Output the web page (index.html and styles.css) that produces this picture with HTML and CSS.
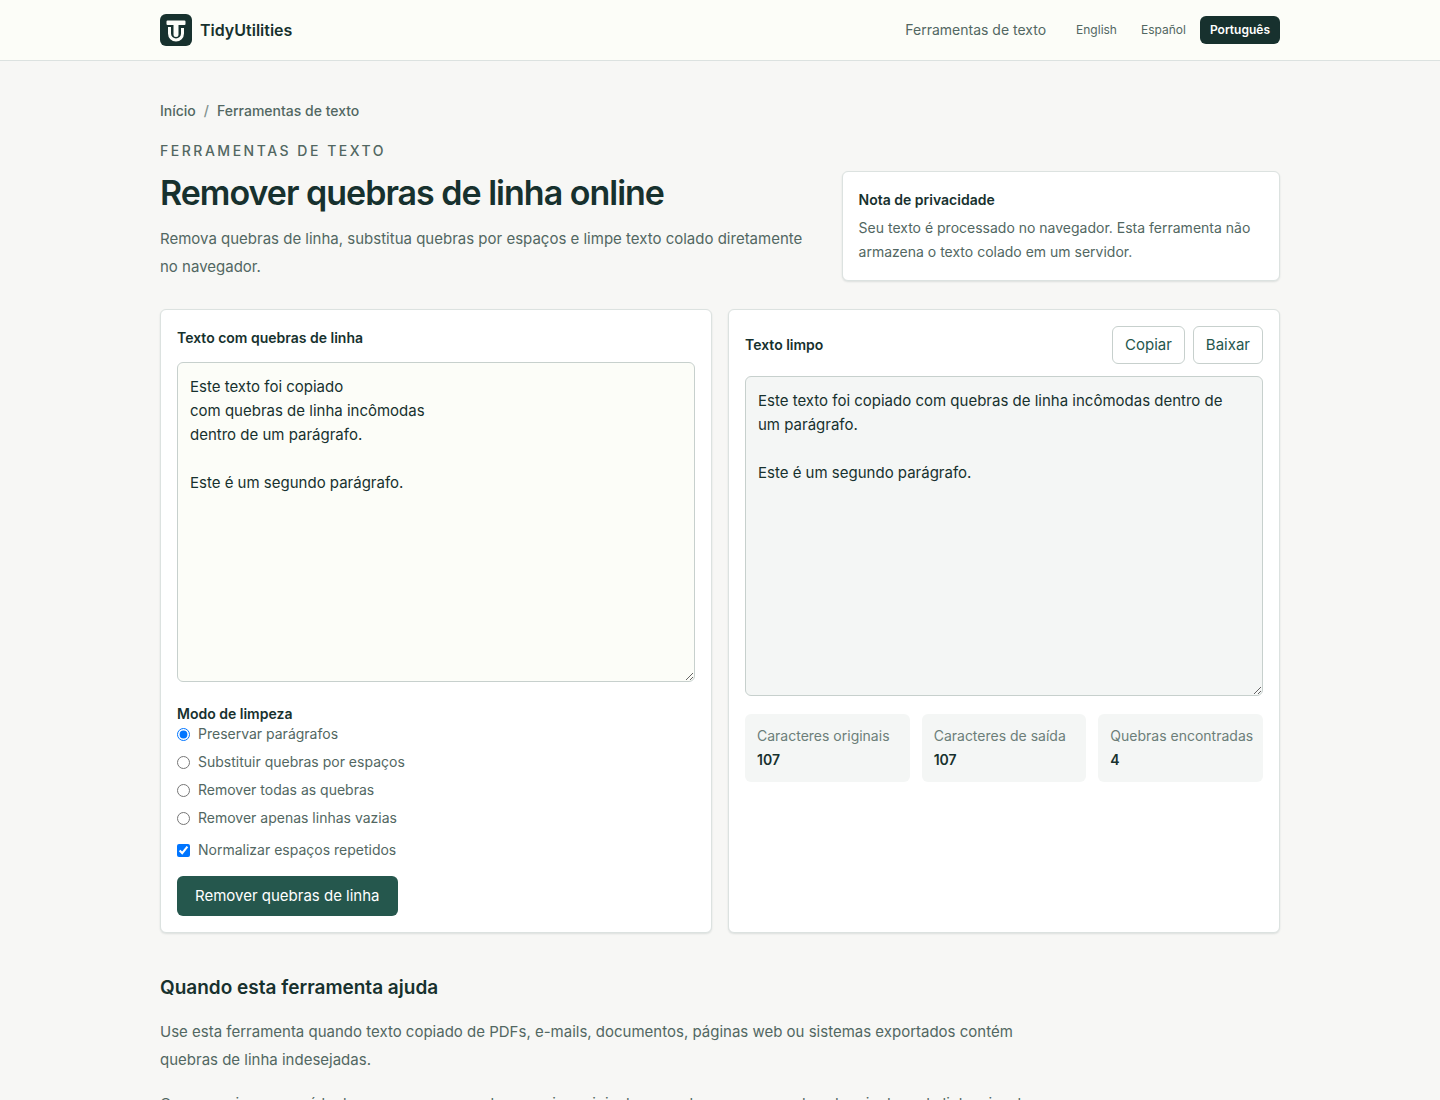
FILE: index.html
```html
<!DOCTYPE html>
<html lang="pt">
<head>
<meta charset="utf-8">
<meta name="viewport" content="width=device-width, initial-scale=1">
<title>Remover quebras de linha online | TidyUtilities</title>
<link rel="stylesheet" href="styles.css">
</head>
<body>
<header class="site-header">
  <div class="container header-row">
    <a class="brand" href="#">
      <svg class="logo" viewBox="0 0 32 32" aria-hidden="true">
        <rect width="32" height="32" rx="6" fill="#17312e"/>
        <path d="M7.500 6.500H24.500a1 1 0 0 1 1 1V10a1 1 0 0 1-1 1H18.500V20.500a2.500 2.500 0 0 1-5 0V11H7.500a1 1 0 0 1-1-1V7.500a1 1 0 0 1 1-1Z" fill="#fcfdf8"/>
        <path d="M9.500 13V19.500a6.500 6.500 0 0 0 13 0V14" fill="none" stroke="#fcfdf8" stroke-width="3"/>
      </svg>
      <span>TidyUtilities</span>
    </a>
    <div class="header-nav">
      <a class="nav-link" href="#">Ferramentas de texto</a>
      <nav class="languages" aria-label="Idioma">
        <a class="language" href="#">English</a>
        <a class="language" href="#">Español</a>
        <a class="language language-current" href="#" aria-current="page">Português</a>
      </nav>
    </div>
  </div>
</header>
<main class="container main">
  <nav class="breadcrumb" aria-label="Navegação">
    <a href="#">Início</a><span class="separator">/</span><a href="#">Ferramentas de texto</a>
  </nav>
  <section class="hero">
    <div>
      <p class="eyebrow">Ferramentas de texto</p>
      <h1>Remover quebras de linha online</h1>
      <p class="lead">Remova quebras de linha, substitua quebras por espaços e limpe texto colado diretamente no navegador.</p>
    </div>
    <aside class="card note">
      <h2 class="small-title">Nota de privacidade</h2>
      <p>Seu texto é processado no navegador. Esta ferramenta não armazena o texto colado em um servidor.</p>
    </aside>
  </section>
  <section class="tool">
    <form class="card">
      <label class="small-title" for="source">Texto com quebras de linha</label>
      <textarea class="text-area" id="source">Este texto foi copiado
com quebras de linha incômodas
dentro de um parágrafo.

Este é um segundo parágrafo.</textarea>
      <fieldset class="modes">
        <legend>Modo de limpeza</legend>
        <label class="option"><input type="radio" name="mode" checked>Preservar parágrafos</label>
        <label class="option"><input type="radio" name="mode">Substituir quebras por espaços</label>
        <label class="option"><input type="radio" name="mode">Remover todas as quebras</label>
        <label class="option"><input type="radio" name="mode">Remover apenas linhas vazias</label>
      </fieldset>
      <label class="option normalize"><input type="checkbox" checked>Normalizar espaços repetidos</label>
      <button class="button-primary" type="button">Remover quebras de linha</button>
    </form>
    <div class="card">
      <div class="output-head">
        <label class="small-title" for="output">Texto limpo</label>
        <div class="actions">
          <button class="button" type="button">Copiar</button>
          <button class="button" type="button">Baixar</button>
        </div>
      </div>
      <textarea class="text-area output" id="output" readonly>Este texto foi copiado com quebras de linha incômodas dentro de um parágrafo.

Este é um segundo parágrafo.</textarea>
      <dl class="stats">
        <div class="stat"><dt>Caracteres originais</dt><dd>107</dd></div>
        <div class="stat"><dt>Caracteres de saída</dt><dd>107</dd></div>
        <div class="stat"><dt>Quebras encontradas</dt><dd>4</dd></div>
      </dl>
    </div>
  </section>
  <section class="article">
    <h2>Quando esta ferramenta ajuda</h2>
    <p>Use esta ferramenta quando texto copiado de PDFs, e-mails, documentos, páginas web ou sistemas exportados contém quebras de linha indesejadas.</p>
    <p>O caso mais comum é texto que parece normal no arquivo original, mas cola com uma quebra depois de cada linha visual.</p>
  </section>
</main>
</body>
</html>
```
FILE: styles.css
```css
* {
  box-sizing: border-box;
}

body {
  margin: 0;
  background: #f7f7f5;
  color: #17312e;
  font-family: Inter, "Liberation Sans", sans-serif;
  font-size: 15px;
  line-height: 24px;
}

h1, h2, p, dl, dd {
  margin: 0;
}

a {
  color: inherit;
  text-decoration: none;
}

button, textarea {
  font: inherit;
}

.container {
  max-width: 1152px;
  margin: 0 auto;
  padding: 0 16px;
}

.site-header {
  background: #fcfdf8;
  border-bottom: 1px solid #dce2e0;
}

.header-row {
  display: flex;
  align-items: center;
  justify-content: space-between;
  min-height: 60px;
}

.brand {
  display: flex;
  align-items: center;
  gap: 8px;
  font-size: 16px;
  font-weight: 600;
}

.logo {
  width: 32px;
  height: 32px;
}

.header-nav {
  display: flex;
  align-items: center;
  gap: 20px;
}

.nav-link {
  font-size: 14px;
  color: #526762;
}

.languages {
  display: flex;
  gap: 4px;
}

.language {
  padding: 6px 10px;
  border-radius: 6px;
  font-size: 12px;
  line-height: 16px;
  color: #526762;
}

.language-current {
  background: #17312e;
  color: #fff;
  font-weight: 600;
}

.main {
  padding-top: 40px;
  padding-bottom: 40px;
}

.breadcrumb {
  display: flex;
  gap: 8px;
  font-size: 14px;
  line-height: 20px;
  font-weight: 500;
  color: #526762;
}

.separator {
  color: #81918d;
}

.hero {
  display: grid;
  grid-template-columns: 3fr 2fr;
  gap: 24px;
  align-items: end;
  margin-top: 20px;
}

.eyebrow {
  font-size: 14px;
  line-height: 20px;
  font-weight: 500;
  letter-spacing: 0.18em;
  text-transform: uppercase;
  color: #526762;
}

h1 {
  margin-top: 12px;
  font-size: 34px;
  line-height: 40px;
  font-weight: 600;
  letter-spacing: -1px;
}

.lead {
  margin-top: 12px;
  line-height: 28px;
  color: #526762;
}

.card {
  padding: 16px;
  background: #fff;
  border: 1px solid #dce2e0;
  border-radius: 6px;
  box-shadow: 0 1px 2px rgba(23, 49, 46, 0.12);
}

.small-title {
  display: block;
  font-size: 14px;
  line-height: 24px;
  font-weight: 600;
}

.note p {
  margin-top: 4px;
  font-size: 14px;
  color: #526762;
}

.tool {
  display: grid;
  grid-template-columns: 1fr 1fr;
  gap: 16px;
  margin-top: 28px;
}

.text-area {
  display: block;
  width: 100%;
  min-height: 320px;
  margin-top: 12px;
  padding: 12px 20px 12px 12px;
  border: 1px solid #c7d0cd;
  border-radius: 6px;
  background: #fcfdf8;
  color: #17312e;
  resize: vertical;
}

.output {
  background: #f4f6f5;
}

.modes {
  display: grid;
  gap: 8px;
  margin: 22px 0 0;
  padding: 0;
  border: 0;
}

.modes legend {
  padding: 0;
  font-size: 14px;
  line-height: 20px;
  font-weight: 600;
}

.option {
  display: flex;
  align-items: center;
  gap: 8px;
  font-size: 14px;
  line-height: 20px;
  color: #526762;
}

.option input {
  width: 13px;
  height: 13px;
  margin: 0;
}

.normalize {
  margin-top: 12px;
}

.button-primary {
  margin-top: 16px;
  padding: 8px 18px;
  border: 0;
  border-radius: 6px;
  background: #25574d;
  color: #fff;
}

.output-head {
  display: flex;
  align-items: center;
  justify-content: space-between;
}

.actions {
  display: flex;
  gap: 8px;
}

.button {
  padding: 6px 12px;
  border: 1px solid #c7d0cd;
  border-radius: 6px;
  background: #fff;
  color: #25574d;
}

.stats {
  display: grid;
  grid-template-columns: repeat(3, minmax(0, 1fr));
  gap: 12px;
  margin-top: 18px;
}

.stat {
  padding: 12px;
  border-radius: 6px;
  background: #f4f6f5;
  font-size: 14px;
  line-height: 20px;
}

.stat dt {
  color: #6c7e79;
  white-space: nowrap;
}

.stat dd {
  margin-top: 4px;
  font-weight: 600;
}

.article {
  max-width: 896px;
  margin-top: 41px;
}

.article h2 {
  font-size: 19px;
  line-height: 28px;
  font-weight: 600;
}

.article p {
  margin-top: 16px;
  line-height: 28px;
  color: #526762;
}
```
